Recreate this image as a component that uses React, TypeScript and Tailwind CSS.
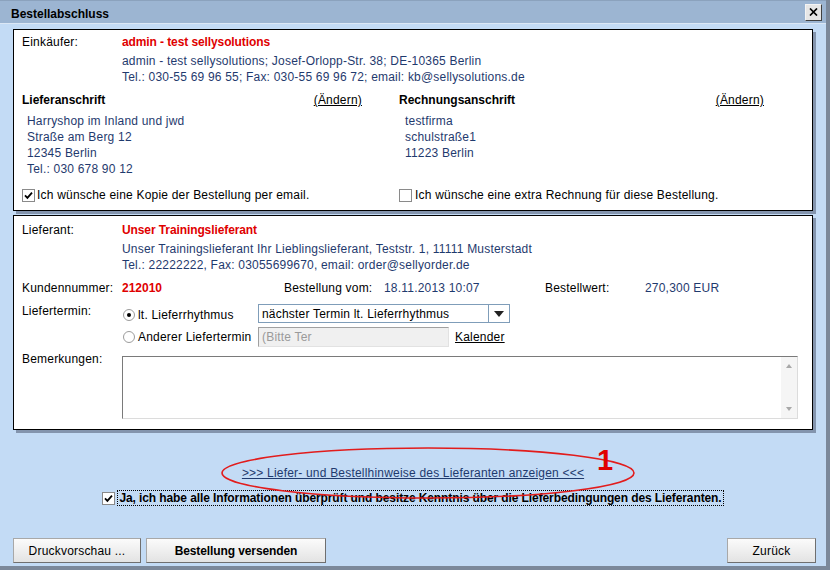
import React from "react";

const navy = "text-[#1f3a6e]";

function Check({ checked }: { checked?: boolean }) {
  return (
    <span className="inline-flex h-[13px] w-[13px] shrink-0 items-center justify-center border border-[#8a8a8a] bg-white">
      {checked && (
        <svg width="9" height="9" viewBox="0 0 9 9">
          <path d="M1 4.3 L3.4 6.8 L8 1.6" stroke="#000" strokeWidth="1.8" fill="none" />
        </svg>
      )}
    </span>
  );
}

function Radio({ on }: { on?: boolean }) {
  return (
    <span className="inline-flex h-[12px] w-[12px] shrink-0 items-center justify-center rounded-full border border-[#9c9c9c] bg-white">
      {on && <span className="h-[4px] w-[4px] rounded-full bg-black" />}
    </span>
  );
}

function Btn({ children, bold, w }: { children: React.ReactNode; bold?: boolean; w: string }) {
  return (
    <button
      className={`${w} h-[25px] border border-[#a8a8a8] border-r-[#6f6f6f] border-b-[#6f6f6f] bg-gradient-to-b from-[#fbfbfb] to-[#e3e3e3] text-[12px] text-black ${bold ? "font-bold tracking-[-0.1px]" : ""}`}
    >
      {children}
    </button>
  );
}

export default function App() {
  return (
    <div className="relative flex h-[570px] w-[830px] flex-col border-r-[4px] border-b-[4px] border-[#7b889a] bg-[#c3dbf5] font-['Liberation_Sans',Arial,sans-serif] text-[12px] leading-[16px] tracking-[0.2px] text-black">
      {/* title bar */}
      <div className="flex h-[24px] shrink-0 items-center justify-between border-t border-b border-t-[#8ba2bd] border-b-[#dbe7f5] bg-[#9cb5d2] pl-[11px] pr-[4px]">
        <span className="pt-[3px] font-bold tracking-normal">Bestellabschluss</span>
        <span className="flex h-[17px] w-[17px] items-center justify-center border border-[#f4f4f4] border-r-[#404040] border-b-[#404040] bg-[#e6e6e6]">
          <svg width="9" height="8" viewBox="0 0 9 8">
            <path d="M1 0.5 L8 7.5 M8 0.5 L1 7.5" stroke="#000" strokeWidth="1.7" />
          </svg>
        </span>
      </div>

      <div className="flex flex-1 flex-col px-[13px] pt-[5px] pb-[3px]">
        {/* Einkäufer panel */}
        <div className="border border-black bg-white pl-[8px] pr-[15px] pt-[4px] pb-[7px] shadow-[3px_3px_0_#8394ad]">
          <div className="flex h-[16px] items-center">
            <span className="w-[100px]">Einkäufer:</span>
            <span className="font-bold tracking-[-0.1px] text-[#e00000]">admin - test sellysolutions</span>
          </div>
          <div className={`mt-[3px] pl-[100px] ${navy}`}>
            <div>admin - test sellysolutions; Josef-Orlopp-Str. 38; DE-10365 Berlin</div>
            <div>Tel.: 030-55 69 96 55; Fax: 030-55 69 96 72; email: kb@sellysolutions.de</div>
          </div>
          <div className="mt-[7px] flex gap-[37px]">
            <div className="w-[340px]">
              <div className="flex h-[16px] items-center justify-between">
                <span className="font-bold tracking-normal">Lieferanschrift</span>
                <span className="underline">(Ändern)</span>
              </div>
              <div className={`mt-[5px] pl-[5px] ${navy}`}>
                <div>Harryshop im Inland und jwd</div>
                <div>Straße am Berg 12</div>
                <div>12345 Berlin</div>
                <div>Tel.: 030 678 90 12</div>
              </div>
            </div>
            <div className="w-[365px]">
              <div className="flex h-[16px] items-center justify-between">
                <span className="font-bold tracking-normal">Rechnungsanschrift</span>
                <span className="underline">(Ändern)</span>
              </div>
              <div className={`mt-[5px] pl-[6px] ${navy}`}>
                <div>testfirma</div>
                <div>schulstraße1</div>
                <div>11223 Berlin</div>
              </div>
            </div>
          </div>
          <div className="mt-[10px] flex gap-[37px]">
            <div className="flex h-[16px] w-[340px] items-center gap-[2px]">
              <Check checked />
              <span>Ich wünsche eine Kopie der Bestellung per email.</span>
            </div>
            <div className="flex h-[16px] w-[365px] items-center gap-[3px]">
              <Check />
              <span>Ich wünsche eine extra Rechnung für diese Bestellung.</span>
            </div>
          </div>
        </div>

        {/* Lieferant panel */}
        <div className="mt-[4px] border border-black bg-white pl-[8px] pr-[14px] pt-[6px] pb-[10px] shadow-[3px_3px_0_#8394ad]">
          <div className="flex h-[16px] items-center">
            <span className="w-[100px]">Lieferant:</span>
            <span className="font-bold tracking-[-0.1px] text-[#e00000]">Unser Trainingslieferant</span>
          </div>
          <div className={`mt-[3px] pl-[100px] ${navy}`}>
            <div>Unser Trainingslieferant Ihr Lieblingslieferant, Teststr. 1, 11111 Musterstadt</div>
            <div>Tel.: 22222222, Fax: 03055699670, email: order@sellyorder.de</div>
          </div>
          <div className="mt-[7px] flex h-[16px] items-center">
            <span className="w-[100px]">Kundennummer:</span>
            <span className="w-[162px] font-bold tracking-normal text-[#e00000]">212010</span>
            <span className="w-[100px]">Bestellung vom:</span>
            <span className={`w-[161px] ${navy}`}>18.11.2013 10:07</span>
            <span className="w-[100px]">Bestellwert:</span>
            <span className={navy}>270,300 EUR</span>
          </div>
          <div className="mt-[8px] flex">
            <span className="-mt-[1px] w-[100px]">Liefertermin:</span>
            <div className="flex flex-col">
              <div className="flex h-[19px] items-center">
                <div className="flex w-[136px] items-center gap-[3px] pl-[1px] pt-[3px]">
                  <Radio on />
                  <span>lt. Lieferrhythmus</span>
                </div>
                <div className="flex h-[19px] w-[252px] items-center border border-[#7f9db9] bg-white">
                  <span className="flex-1 pl-[3px]">nächster Termin lt. Lieferrhythmus</span>
                  <span className="flex h-full w-[21px] items-center justify-center border-l border-[#7f9db9]">
                    <svg width="10" height="6" viewBox="0 0 10 6">
                      <path d="M0 0 L10 0 L5 6 Z" fill="#222" />
                    </svg>
                  </span>
                </div>
              </div>
              <div className="mt-[4px] flex h-[20px] items-center">
                <div className="flex w-[136px] items-center gap-[3px] pl-[1px]">
                  <Radio />
                  <span>Anderer Liefertermin</span>
                </div>
                <div className="flex h-[20px] w-[191px] items-center border border-[#a0a0a0] border-r-[#e2e2e2] border-b-[#e2e2e2] bg-[#f0f0f0] pl-[3px] text-[#9a9a9a]">
                  (Bitte Ter
                </div>
                <span className="ml-[6px] underline">Kalender</span>
              </div>
            </div>
          </div>
          <div className="mt-[9px] flex">
            <span className="-mt-[5px] w-[100px]">Bemerkungen:</span>
            <div className="flex h-[63px] w-[676px] border border-[#7a7a7a] border-r-[#dcdcdc] border-b-[#dcdcdc] bg-white">
              <div className="flex-1" />
              <div className="flex w-[16px] flex-col items-center justify-between bg-[#f5f5f5] py-[7px]">
                <svg width="6" height="4" viewBox="0 0 6 4">
                  <path d="M0 4 L6 4 L3 0 Z" fill="#a8a8a8" />
                </svg>
                <svg width="6" height="4" viewBox="0 0 6 4">
                  <path d="M0 0 L6 0 L3 4 Z" fill="#a8a8a8" />
                </svg>
              </div>
            </div>
          </div>
        </div>

        {/* link and confirmation */}
        <div className="mt-[35px] flex justify-center">
          <span className={`underline ${navy}`}>&gt;&gt;&gt; Liefer- und Bestellhinweise des Lieferanten anzeigen &lt;&lt;&lt;</span>
        </div>
        <div className="mt-[9px] flex h-[16px] items-center justify-center gap-[2px]">
          <Check checked />
          <span className="border border-dotted border-black px-[1px] font-bold leading-[14px] tracking-[-0.1px]">
            Ja, ich habe alle Informationen überprüft und besitze Kenntnis über die Lieferbedingungen des Lieferanten.
          </span>
        </div>

        <div className="flex-1" />
        <div className="flex items-end gap-[5px]">
          <Btn w="w-[128px]">Druckvorschau ...</Btn>
          <Btn w="w-[180px]" bold>
            Bestellung versenden
          </Btn>
          <div className="flex-1" />
          <div className="-mr-[3px]">
            <Btn w="w-[89px]">Zurück</Btn>
          </div>
        </div>
      </div>

      {/* red annotation drawn over the dialog */}
      <svg className="pointer-events-none absolute left-0 top-0" width="830" height="570">
        <ellipse cx="428" cy="473" rx="206" ry="25" fill="none" stroke="#e21c1c" strokeWidth="1.6" />
      </svg>
      <span className="pointer-events-none absolute left-[597px] top-[440px] text-[29px] leading-[40px] font-bold tracking-normal text-[#e00000]">1</span>
    </div>
  );
}
